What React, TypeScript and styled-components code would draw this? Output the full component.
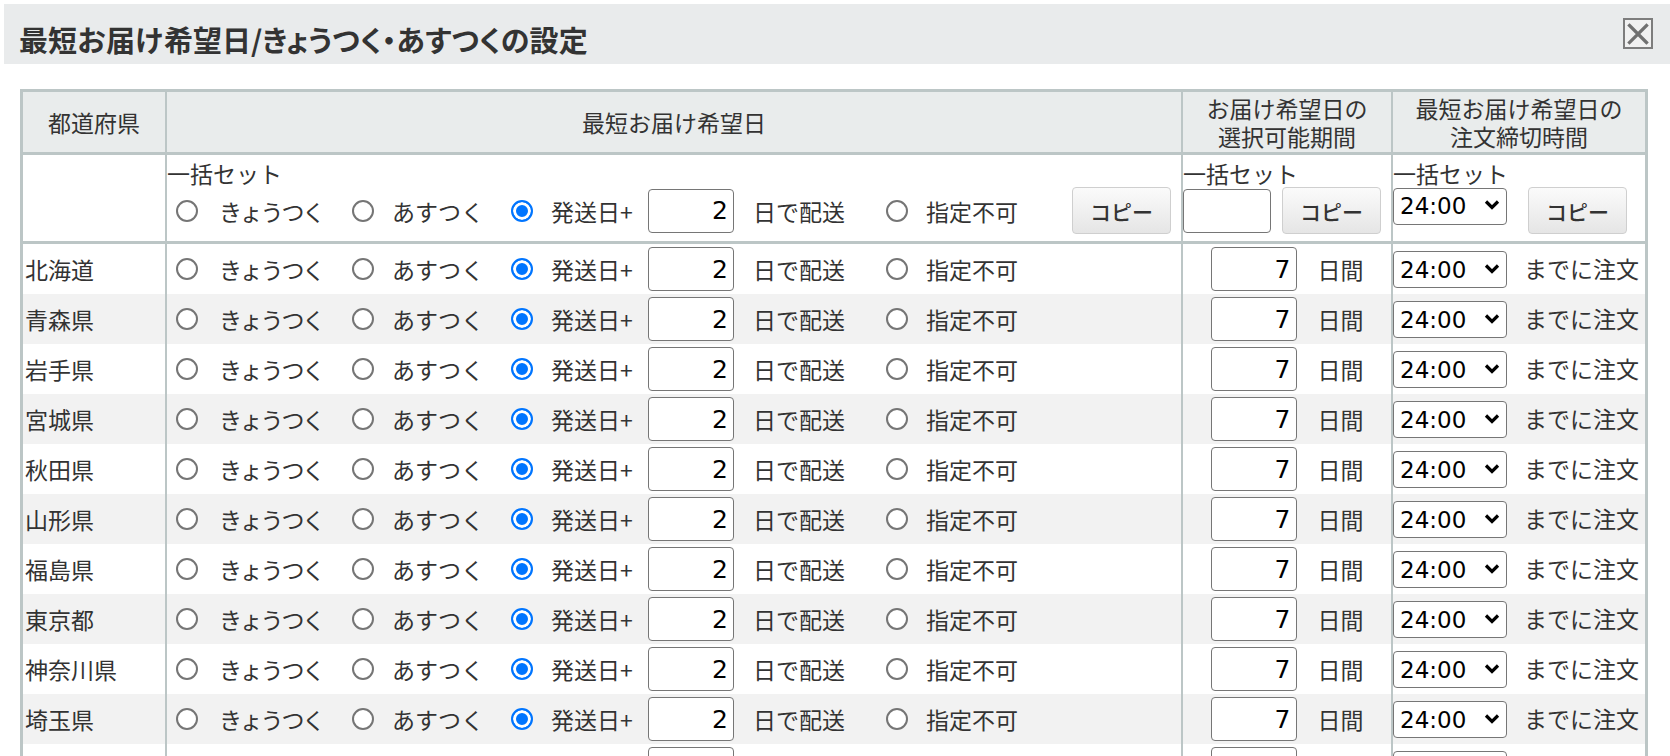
import React from "react";
import styled, { createGlobalStyle } from "styled-components";

const GlobalStyle = createGlobalStyle`
  html, body {
    margin: 0;
    padding: 0;
    background: #fff;
    overflow: hidden;
  }
  body {
    font-family: "Noto Sans CJK JP", "Noto Sans", sans-serif;
    font-size: 23px;
    color: #333;
  }
`;

const LINE = "#bcc6c6";
const DIGITS = `"DejaVu Sans", Verdana, sans-serif`;

const Page = styled.div`
  padding: 4px 0 0 4px;
  height: 100vh;
  box-sizing: border-box;
`;

const TitleBar = styled.header`
  display: flex;
  align-items: center;
  justify-content: space-between;
  height: 60px;
  padding: 0 17px 0 15px;
  box-sizing: border-box;
  background: #e9ebec;
`;

const Title = styled.h1`
  margin: 10px 0 0;
  font-size: 29px;
  font-weight: bold;
  line-height: 1;
  color: #333;
  white-space: nowrap;
`;

const TitleKana = styled.span`
  font-feature-settings: "palt";
  letter-spacing: 0.2px;
`;

const CloseButton = styled.button`
  display: flex;
  align-items: center;
  justify-content: center;
  width: 30px;
  height: 31px;
  margin-top: -1px;
  padding: 0;
  border: 2px solid #7d7d7d;
  background: #f1f1f1;
  cursor: pointer;
`;

const TableArea = styled.div`
  padding: 25px 0 0 16px;
`;

const Grid = styled.table`
  border-collapse: separate;
  border-spacing: 0;
  table-layout: fixed;
  width: 1628px;
  border: 3px solid ${LINE};
`;

const Col = styled.col<{ $w: number }>`
  width: ${(p) => p.$w}px;
`;

const HeadCell = styled.th`
  height: 60px;
  padding: 0;
  background: #e9ecec;
  font-weight: normal;
  line-height: 28px;
  text-align: center;
  vertical-align: middle;
  border-bottom: 3px solid ${LINE};
  & + & {
    border-left: 2px solid ${LINE};
  }
`;

const BulkCell = styled.td`
  padding: 4px 0 7px;
  vertical-align: top;
  background: #fff;
  border-bottom: 3px solid ${LINE};
  & + & {
    border-left: 2px solid ${LINE};
  }
`;

const BodyRow = styled.tr<{ $shade: boolean }>`
  background: ${(p) => (p.$shade ? "#f2f2f2" : "#fff")};
`;

const Cell = styled.td`
  height: 50px;
  padding: 0;
  vertical-align: middle;
  & + & {
    border-left: 2px solid ${LINE};
  }
`;

const PrefName = styled.span`
  display: block;
  padding-left: 2px;
  line-height: 28px;
  white-space: nowrap;
`;

const BulkLabel = styled.div`
  line-height: 28px;
  white-space: nowrap;
`;

const Controls = styled.div<{ $center?: boolean; $indent?: number; $tall?: boolean }>`
  display: flex;
  align-items: center;
  justify-content: ${(p) => (p.$center ? "center" : "flex-start")};
  height: ${(p) => (p.$tall ? "47px" : "auto")};
  padding-left: ${(p) => p.$indent ?? 0}px;
  white-space: nowrap;
`;

const Option = styled.label<{ $w?: number }>`
  display: flex;
  align-items: center;
  flex: none;
  width: ${(p) => (p.$w ? `${p.$w}px` : "auto")};
`;

/* the real radio stays in the label for keyboard/click; the mark beside it draws it */
const RadioInput = styled.input`
  appearance: none;
  -webkit-appearance: none;
  width: 0;
  height: 0;
  margin: 0;
  padding: 0;
  border: 0;
  opacity: 0;
`;

const RadioMark = styled.span`
  flex: none;
  width: 22px;
  height: 22px;
  margin-left: -1px;
  margin-right: -1px;
  box-sizing: border-box;
  border: 2px solid #757575;
  border-radius: 50%;
  background: #fff;
  ${RadioInput}:checked + & {
    border: 2px solid #0075ff;
    background: #0075ff;
    box-shadow: inset 0 0 0 3px #fff;
  }
`;

const OptText = styled.span<{ $gap?: number; $squeeze?: number; $w?: number }>`
  flex: none;
  width: ${(p) => (p.$w ? `${p.$w}px` : "auto")};
  margin-left: ${(p) => p.$gap ?? 20}px;
  letter-spacing: ${(p) => p.$squeeze ?? 0}px;
  line-height: 28px;
`;

const NumField = styled.input<{ $w: number; $gap?: number }>`
  flex: none;
  width: ${(p) => p.$w}px;
  height: 44px;
  margin: 0 0 0 ${(p) => p.$gap ?? 0}px;
  padding: 0 5px;
  box-sizing: border-box;
  border: 1px solid #767676;
  border-radius: 4px;
  background: #fff;
  font-family: ${DIGITS};
  font-size: 25px;
  color: #000;
  text-align: right;
`;

const Suffix = styled.span<{ $gap: number }>`
  margin-left: ${(p) => p.$gap}px;
  line-height: 28px;
`;

const CopyButton = styled.button<{ $gap?: number; $auto?: boolean }>`
  flex: none;
  width: 99px;
  height: 47px;
  margin-left: ${(p) => (p.$auto ? "auto" : `${p.$gap ?? 0}px`)};
  margin-right: ${(p) => (p.$auto ? "10px" : "0")};
  padding: 0;
  border: 1px solid #cfcfcf;
  border-radius: 4px;
  background: linear-gradient(#fbfbfb, #e5e5e5);
  font-family: "Noto Sans CJK JP", sans-serif;
  font-size: 21px;
  font-weight: 500;
  color: #333;
  cursor: pointer;
`;

const SelectBox = styled.div<{ $top?: boolean }>`
  position: relative;
  flex: none;
  width: 114px;
  height: 37px;
  align-self: ${(p) => (p.$top ? "flex-start" : "center")};
`;

const TimeSelect = styled.select`
  appearance: none;
  -webkit-appearance: none;
  width: 100%;
  height: 100%;
  margin: 0;
  padding: 0 0 0 6px;
  box-sizing: border-box;
  border: 1px solid #767676;
  border-radius: 4px;
  background: #fff;
  font-family: ${DIGITS};
  font-size: 23px;
  color: #000;
`;

const Chevron = styled.svg`
  position: absolute;
  right: 7px;
  top: 12px;
  pointer-events: none;
`;

const TimeText = styled.span`
  margin-left: 17px;
  margin-top: -3px;
  line-height: 28px;
`;

const prefectures = [
  "北海道",
  "青森県",
  "岩手県",
  "宮城県",
  "秋田県",
  "山形県",
  "福島県",
  "東京都",
  "神奈川県",
  "埼玉県",
  "千葉県",
  "茨城県",
];

const times = ["24:00", "23:00", "22:00", "21:00", "20:00", "18:00", "15:00", "12:00"];

function TimePicker({ top }: { top?: boolean }) {
  return (
    <SelectBox $top={top}>
      <TimeSelect defaultValue="24:00">
        {times.map((t) => (
          <option key={t} value={t}>
            {t}
          </option>
        ))}
      </TimeSelect>
      <Chevron width="16" height="12" viewBox="0 0 16 12">
        <path d="M2 2.5l6 6 6-6" fill="none" stroke="#000" strokeWidth="3.2" />
      </Chevron>
    </SelectBox>
  );
}

function RadioChoice({ name, checked }: { name: string; checked?: boolean }) {
  return (
    <>
      <RadioInput type="radio" name={name} defaultChecked={checked} />
      <RadioMark />
    </>
  );
}

function DeliveryChoices({ name, bulk }: { name: string; bulk?: boolean }) {
  return (
    <Controls $indent={10} $tall={bulk}>
      <Option $w={176}>
        <RadioChoice name={name} />
        <OptText $gap={22} $squeeze={-2.2}>
          きょうつく
        </OptText>
      </Option>
      <Option $w={159}>
        <RadioChoice name={name} />
        <OptText $gap={19}>あすつく</OptText>
      </Option>
      <Option $w={375}>
        <RadioChoice name={name} checked />
        <OptText $gap={19} $w={97}>
          発送日+
        </OptText>
        <NumField $w={86} defaultValue="2" />
        <Suffix $gap={19}>日で配送</Suffix>
      </Option>
      <Option>
        <RadioChoice name={name} />
        <OptText $gap={19}>指定不可</OptText>
      </Option>
      {bulk && <CopyButton $auto>コピー</CopyButton>}
    </Controls>
  );
}

export default function App() {
  return (
    <>
      <GlobalStyle />
      <Page>
        <TitleBar>
          <Title>
            最短お届け希望日/<TitleKana>きょうつく・あすつくの設定</TitleKana>
          </Title>
          <CloseButton aria-label="閉じる">
            <svg width="24" height="24" viewBox="0 0 24 24">
              <path
                d="M3.5 3.5l17 17M20.5 3.5l-17 17"
                stroke="#5a5a5a"
                strokeWidth="3.2"
                strokeLinecap="square"
                opacity="0.85"
              />
            </svg>
          </CloseButton>
        </TitleBar>

        <TableArea>
          <Grid>
            <colgroup>
              <Col $w={142} />
              <Col $w={1016} />
              <Col $w={210} />
              <Col $w={254} />
            </colgroup>
            <thead>
              <tr>
                <HeadCell>都道府県</HeadCell>
                <HeadCell>最短お届け希望日</HeadCell>
                <HeadCell>
                  お届け希望日の
                  <br />
                  選択可能期間
                </HeadCell>
                <HeadCell>
                  最短お届け希望日の
                  <br />
                  注文締切時間
                </HeadCell>
              </tr>
            </thead>
            <tbody>
              <tr>
                <BulkCell />
                <BulkCell>
                  <BulkLabel>一括セット</BulkLabel>
                  <DeliveryChoices name="bulk-delivery" bulk />
                </BulkCell>
                <BulkCell>
                  <BulkLabel>一括セット</BulkLabel>
                  <Controls $tall>
                    <NumField $w={88} defaultValue="" />
                    <CopyButton $gap={11}>コピー</CopyButton>
                  </Controls>
                </BulkCell>
                <BulkCell>
                  <BulkLabel>一括セット</BulkLabel>
                  <Controls $tall>
                    <TimePicker top />
                    <CopyButton $gap={21}>コピー</CopyButton>
                  </Controls>
                </BulkCell>
              </tr>
              {prefectures.map((pref, i) => (
                <BodyRow key={pref} $shade={i % 2 === 1}>
                  <Cell>
                    <PrefName>{pref}</PrefName>
                  </Cell>
                  <Cell>
                    <DeliveryChoices name={`delivery-${i}`} />
                  </Cell>
                  <Cell>
                    <Controls $center>
                      <NumField $w={86} defaultValue="7" />
                      <Suffix $gap={21}>日間</Suffix>
                    </Controls>
                  </Cell>
                  <Cell>
                    <Controls>
                      <TimePicker />
                      <TimeText>までに注文</TimeText>
                    </Controls>
                  </Cell>
                </BodyRow>
              ))}
            </tbody>
          </Grid>
        </TableArea>
      </Page>
    </>
  );
}
